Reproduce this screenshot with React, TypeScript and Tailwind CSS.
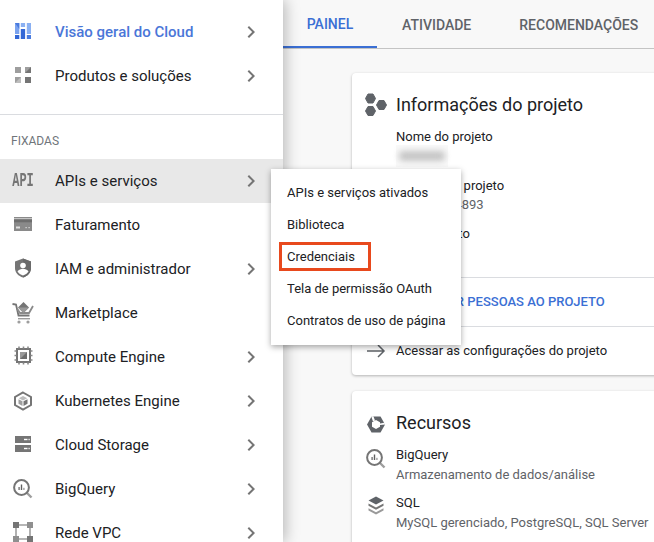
import React from 'react';

const Chevron = () => (
  <svg viewBox="0 0 24 24" className="h-6 w-6 fill-[#757575]">
    <path d="M10 6 8.59 7.41 13.17 12l-4.58 4.59L10 18l6-6z" />
  </svg>
);

const Svg = ({ children, className = 'h-6 w-6' }: { children: React.ReactNode; className?: string }) => (
  <svg viewBox="0 0 24 24" className={className}>
    {children}
  </svg>
);

const OverviewIcon = () => (
  <Svg>
    <rect x="4" y="3" width="4.3" height="11" fill="#7ba3ef" />
    <path d="M4 3h4.3v6z" fill="#4a7bde" />
    <rect x="4" y="15" width="4.3" height="4" fill="#3367d6" />
    <rect x="9.8" y="3" width="4.3" height="4" fill="#8ab0f2" />
    <rect x="9.8" y="9" width="4.3" height="10" fill="#3367d6" />
    <rect x="15.8" y="3" width="4.2" height="11" fill="#8ab0f2" />
    <rect x="15.8" y="15" width="4.2" height="4" fill="#4a7bde" />
  </Svg>
);

const ProductsIcon = () => (
  <Svg>
    <rect x="4" y="3" width="6" height="6" fill="#9e9e9e" />
    <rect x="14" y="3" width="6" height="6" fill="#9e9e9e" />
    <path d="M20 3v6h-6z" fill="#757575" />
    <rect x="4" y="13" width="6" height="6" fill="#9e9e9e" />
    <path d="M10 13v6H4z" fill="#bdbdbd" />
    <rect x="14" y="13" width="6" height="6" fill="#757575" />
  </Svg>
);

const ApiIcon = () => (
  <span className="flex w-6 origin-center scale-x-[0.6] justify-center font-['Liberation_Mono',monospace] text-[20px] leading-6 font-bold whitespace-nowrap text-[#757575]">
    API
  </span>
);

const BillingIcon = () => (
  <Svg>
    <rect x="3" y="4" width="18" height="14" fill="#8a8a8a" />
    <rect x="3" y="5.5" width="18" height="0.8" fill="#fff" />
    <rect x="3" y="6.3" width="18" height="3" fill="#6e6e6e" />
    <rect x="5" y="13.5" width="4" height="2" fill="#e0e0e0" />
    <rect x="14.5" y="14" width="1.2" height="1.2" fill="#e0e0e0" />
    <rect x="17.5" y="14" width="1.2" height="1.2" fill="#e0e0e0" />
  </Svg>
);

const IamIcon = () => (
  <Svg>
    <path d="M12 1.5 4 4.5v6.5c0 4.6 3.4 8.2 8 9.5 4.6-1.3 8-4.9 8-9.5V4.5z" fill="#757575" />
    <path d="M12 11.5V20.5c4.6-1.3 8-4.9 8-9.5V4.5L12 1.5z" fill="#6a6a6a" />
    <circle cx="12" cy="8.5" r="2.8" fill="#fff" />
    <path d="M6.5 14.5c1.2-1.8 3.4-2.7 5.5-2.7s4.3.9 5.5 2.7c-1.2 1.9-3.2 3.3-5.5 4-2.3-.7-4.3-2.1-5.5-4z" fill="#fff" />
  </Svg>
);

const MarketIcon = () => (
  <Svg>
    <path d="M1.5 3 5 3.5l2.5 11h11" fill="none" stroke="#757575" strokeWidth="1.8" />
    <path d="M6 7.5 9 12h9l4-7" fill="none" stroke="#8a8a8a" strokeWidth="1.8" />
    <path d="M12.5 1 18 6.5 12.5 12 7 6.5z" fill="#757575" />
    <path d="M7 6.5h11L12.5 12z" fill="#9a9a9a" />
    <rect x="7" y="17" width="12" height="1.4" fill="#9a9a9a" />
    <circle cx="8" cy="21" r="1.6" fill="#9e9e9e" />
    <circle cx="17" cy="21" r="1.6" fill="#9e9e9e" />
  </Svg>
);

const ComputeIcon = () => (
  <Svg>
    <rect x="6" y="4" width="13" height="13" fill="none" stroke="#757575" strokeWidth="2" />
    <rect x="9" y="7" width="7" height="7" fill="#9a9a9a" />
    <path d="M16 7v7H9z" fill="#6e6e6e" />
    <path
      d="M8 1.5v2M12.5 1.5v2M17 1.5v2M8 17.5v2M12.5 17.5v2M17 17.5v2M3.5 6h2M3.5 10.5h2M3.5 15h2M19.5 6h2M19.5 10.5h2M19.5 15h2"
      stroke="#8a8a8a"
      strokeWidth="1.6"
    />
  </Svg>
);

const KubeIcon = () => (
  <Svg>
    <path d="M12 3.5 20 8v8l-8 4.5L4 16V8z" fill="none" stroke="#757575" strokeWidth="2" />
    <path d="M12 7 16.2 9.2 12 11.4 7.8 9.2z" fill="#bdbdbd" />
    <path d="M7.5 10.2 11.5 12.3v4.6L7.5 14.7z" fill="#9e9e9e" />
    <path d="M16.5 10.2 12.5 12.3v4.6l4-2.2z" fill="#757575" />
  </Svg>
);

const StorageIcon = () => (
  <Svg>
    <rect x="4" y="3" width="16" height="7" fill="#757575" />
    <rect x="4" y="12" width="16" height="7" fill="#757575" />
    <rect x="13" y="5.8" width="3.5" height="1.4" fill="#fff" />
    <rect x="13" y="14.8" width="3.5" height="1.4" fill="#fff" />
    <rect x="17.5" y="5.8" width="1.2" height="1.4" fill="#fff" />
    <rect x="17.5" y="14.8" width="1.2" height="1.4" fill="#fff" />
  </Svg>
);

const BigQueryIcon = ({ className }: { className?: string }) => (
  <Svg className={className}>
    <path d="m15.5 15.5 5 5" stroke="#9e9e9e" strokeWidth="2.4" />
    <circle cx="10.5" cy="10.5" r="7.4" fill="none" stroke="#757575" strokeWidth="2" />
    <rect x="7.4" y="10" width="1.4" height="3" fill="#757575" />
    <rect x="9.8" y="7.5" width="1.4" height="5.5" fill="#5f5f5f" />
    <rect x="12.2" y="10.8" width="1.4" height="2.2" fill="#9e9e9e" />
  </Svg>
);

const VpcIcon = () => (
  <Svg>
    <path d="M5 4v14M19 4v14M5 4h14M5 18h14" stroke="#9e9e9e" strokeWidth="1.6" fill="none" />
    <rect x="2" y="1" width="6" height="6" fill="#757575" />
    <rect x="16" y="1" width="6" height="6" fill="#8f8f8f" />
    <rect x="2" y="15" width="6" height="6" fill="#8f8f8f" />
    <rect x="16" y="15" width="6" height="6" fill="#757575" />
  </Svg>
);

const HexesIcon = () => (
  <Svg>
    <g fill="#5f6368" stroke="#5f6368" strokeWidth="1" strokeLinejoin="round">
      <path d="M4 1h5l2.5 4.5L9 10H4L1.5 5.5z" />
      <path d="M4 13.5h5l2.5 4.5L9 22.5H4L1.5 18z" />
      <path d="M15 7.5h5L22.5 12 20 16.5h-5L12.5 12z" />
    </g>
  </Svg>
);

const ResourcesIcon = () => (
  <Svg>
    <path d="M7.5 5.5h9l4.5 8-4.5 8h-9L3 13.5z" fill="#5f6368" />
    <path d="M12 9 16 11.2v4.6L12 18l-4-2.2v-4.6z" fill="#fff" />
    <path d="M7.2 5.2 9.4 5.2 11 9.5 9 10.6zM21.4 13.5 20.4 11.8 16 12.4 16 14z" fill="#fff" />
  </Svg>
);

const SqlIcon = () => (
  <Svg>
    <path d="M12 3.5 19.5 7.5 12 11.5 4.5 7.5z" fill="#5f6368" />
    <path d="m4.5 10.5 7.5 4 7.5-4v2.2l-7.5 4-7.5-4z" fill="#757575" />
    <path d="m4.5 15.2 7.5 4 7.5-4v2.2l-7.5 4-7.5-4z" fill="#9a9a9a" />
  </Svg>
);

const topItems = [
  { icon: OverviewIcon, label: 'Visão geral do Cloud', active: true, more: true },
  { icon: ProductsIcon, label: 'Produtos e soluções', more: true },
];

const pinned = [
  { icon: ApiIcon, label: 'APIs e serviços', hover: true, more: true },
  { icon: BillingIcon, label: 'Faturamento' },
  { icon: IamIcon, label: 'IAM e administrador', more: true },
  { icon: MarketIcon, label: 'Marketplace' },
  { icon: ComputeIcon, label: 'Compute Engine', more: true },
  { icon: KubeIcon, label: 'Kubernetes Engine', more: true },
  { icon: StorageIcon, label: 'Cloud Storage', more: true },
  { icon: BigQueryIcon, label: 'BigQuery', more: true },
  { icon: VpcIcon, label: 'Rede VPC', more: true },
];

type NavItem = {
  icon: React.ComponentType;
  label: string;
  active?: boolean;
  hover?: boolean;
  more?: boolean;
};

const NavRow = ({ item }: { item: NavItem }) => (
  <div className={`flex h-11 shrink-0 items-center pl-[11px] ${item.hover ? 'bg-[#e8e8e8]' : ''}`}>
    <div className="h-6 w-6 shrink-0">
      <item.icon />
    </div>
    <span className={`ml-5 w-[184px] text-[15px] ${item.active ? 'font-medium text-[#4a76d8]' : 'text-[#202124]'}`}>
      {item.label}
    </span>
    {item.more && <Chevron />}
  </div>
);

const menuItems = [
  'APIs e serviços ativados',
  'Biblioteca',
  'Credenciais',
  'Tela de permissão OAuth',
  'Contratos de uso de página',
];

export default function App() {
  return (
    <div className="relative flex h-[542px] w-[654px] overflow-hidden bg-[#f8f8f8] font-['Roboto',sans-serif] text-[13px] text-[#202124]">
      {/* Sidebar */}
      <aside className="relative z-10 flex h-full w-[283px] shrink-0 flex-col overflow-hidden bg-white pt-[10px] shadow-[2px_0_14px_rgba(0,0,0,0.28)]">
        {topItems.map((item) => (
          <NavRow key={item.label} item={item} />
        ))}
        <div className="mt-[16px] h-px shrink-0 bg-[#dadce0]" />
        <div className="flex h-[44px] shrink-0 items-center pt-[8px] pl-[11px] text-[12px] text-[#70757a]">FIXADAS</div>
        {pinned.map((item) => (
          <NavRow key={item.label} item={item} />
        ))}
      </aside>

      {/* Main */}
      <main className="min-w-0 flex-1">
        <div className="flex h-[49px] border-b border-[#c4c4c4] text-[14px] font-medium">
          <div className="flex h-[48px] w-[94px] shrink-0 items-center justify-center border-b-2 border-[#3b6fd4] pt-[2px] text-[#3b6fd4]">PAINEL</div>
          <div className="ml-px flex h-[48px] shrink-0 items-center px-6 pt-[2px] text-[#5f6368]">ATIVIDADE</div>
          <div className="flex h-[48px] shrink-0 items-center px-6 pt-[2px] whitespace-nowrap text-[#5f6368]">RECOMENDAÇÕES</div>
        </div>

        <div className="flex w-[440px] flex-col gap-4 pt-6 pl-[69px]">
          {/* Project card */}
          <section className="flex h-[302px] shrink-0 flex-col rounded-sm bg-white shadow-[0_1px_3px_rgba(0,0,0,0.28)]">
            <div className="flex items-center gap-2 pt-5 pl-3">
              <HexesIcon />
              <h2 className="text-[18px] leading-6 whitespace-nowrap">Informações do projeto</h2>
            </div>
            <div className="flex h-[160px] shrink-0 flex-col pt-[10px] pl-11 leading-[18px]">
              <div className="pt-px">Nome do projeto</div>
              <div className="-mt-px flex h-[22px] w-[52px] items-center justify-center bg-[#f9f9f9]">
                <div className="h-[10px] w-[46px] rounded-sm bg-[#c4c4c4] blur-[3px]" />
              </div>
              <div className="mt-[10px]">Número do projeto</div>
              <div className="mt-px text-[#5f6368]">123456784893</div>
              <div className="mt-[11px]">ID do projeto</div>
            </div>
            <div className="flex h-[49px] shrink-0 items-center border-t border-[#dadce0] pl-11 text-[13px] font-medium whitespace-nowrap text-[#3b6fd4]">
              ADICIONAR PESSOAS AO PROJETO
            </div>
            <div className="flex h-[49px] shrink-0 items-center gap-[10px] border-t border-[#dadce0] pl-[14px]">
              <svg viewBox="0 0 20 14" className="h-[14px] w-5 fill-none stroke-[#5f6368] stroke-[1.5]">
                <path d="M1 7h17M12 1l6 6-6 6" />
              </svg>
              <span className="whitespace-nowrap">Acessar as configurações do projeto</span>
            </div>
          </section>

          {/* Resources card */}
          <section className="h-[200px] shrink-0 rounded-sm bg-white shadow-[0_1px_3px_rgba(0,0,0,0.28)]">
            <div className="flex items-center gap-2 pt-[19px] pl-3">
              <ResourcesIcon />
              <h2 className="pt-px text-[18px] leading-6">Recursos</h2>
            </div>
            <div className="mt-[10px] flex gap-2 pl-3">
              <BigQueryIcon className="mt-[2px] h-6 w-6 shrink-0" />
              <div className="leading-5">
                <div>BigQuery</div>
                <div className="whitespace-nowrap text-[#5f6368]">Armazenamento de dados/análise</div>
              </div>
            </div>
            <div className="mt-2 flex gap-2 pl-3">
              <SqlIcon />
              <div className="leading-5">
                <div>SQL</div>
                <div className="whitespace-nowrap text-[#5f6368]">MySQL gerenciado, PostgreSQL, SQL Server</div>
              </div>
            </div>
          </section>
        </div>
      </main>

      {/* Flyout menu */}
      <div className="absolute top-[169px] left-[271px] z-20 w-[190px] bg-white py-2 shadow-[0_2px_6px_rgba(0,0,0,0.35)]">
        {menuItems.map((label) => (
          <div key={label} className="relative flex h-8 items-center pl-4 whitespace-nowrap">
            {label}
            {label === 'Credenciais' && (
              <span className="absolute top-[1px] left-2 h-[29px] w-[92px] border-[3px] border-[#e8491d]" />
            )}
          </div>
        ))}
      </div>
    </div>
  );
}
